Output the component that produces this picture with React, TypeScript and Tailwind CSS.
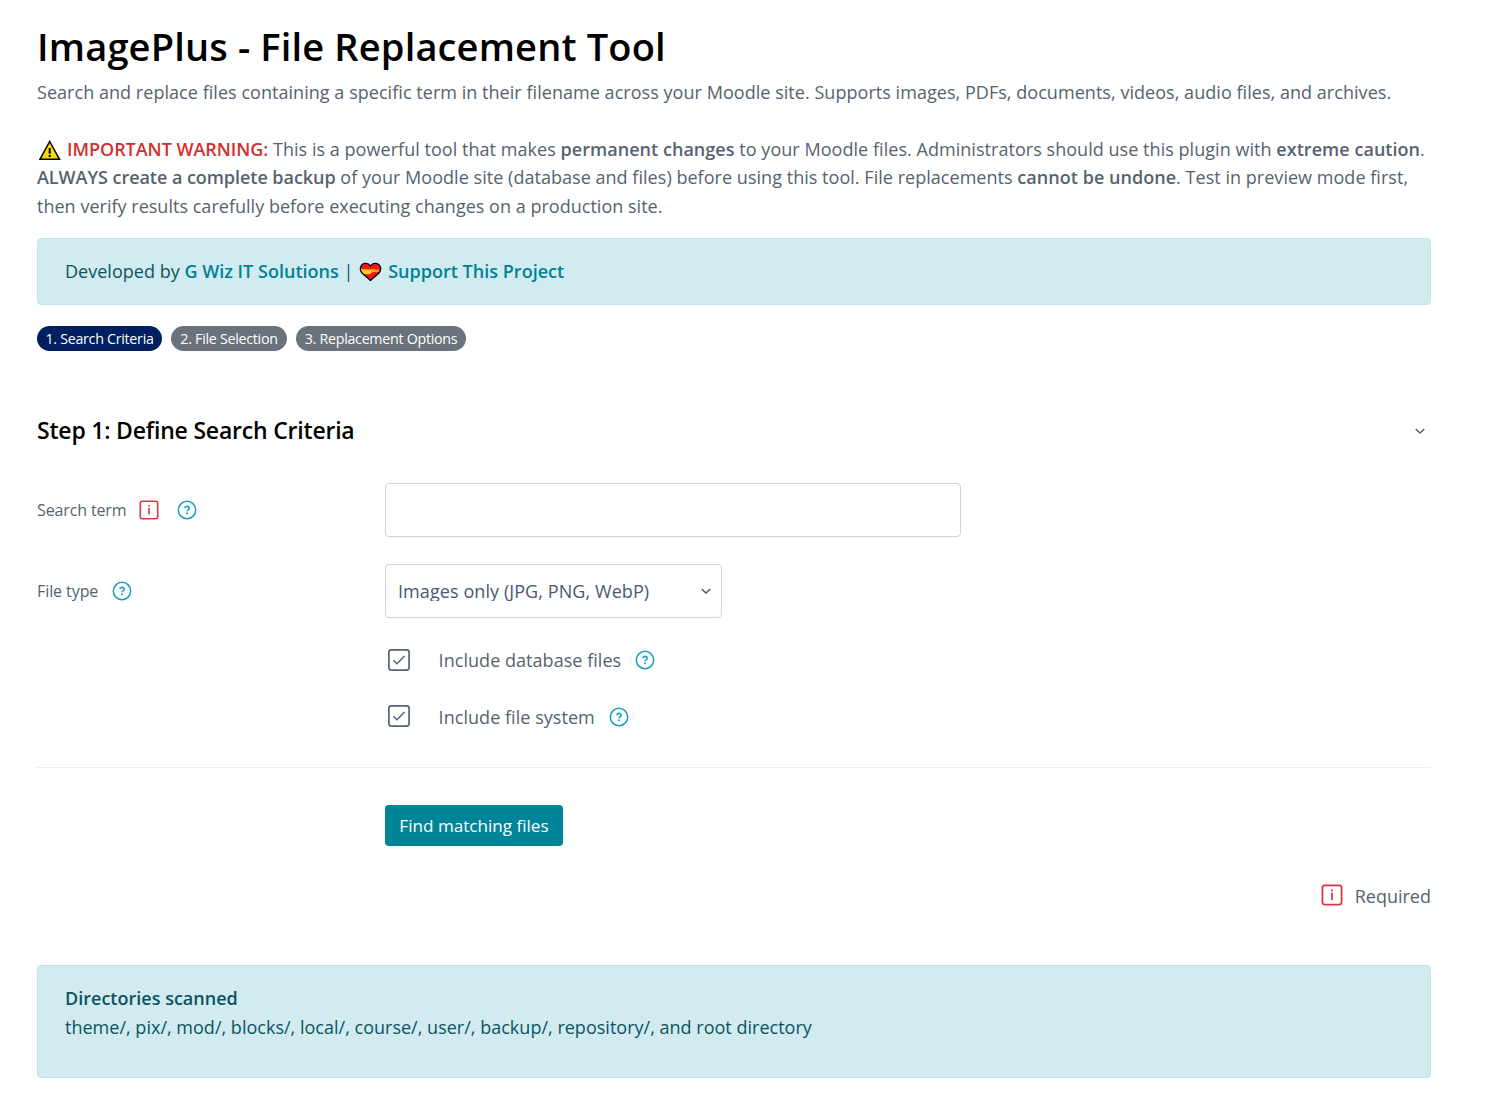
import React from "react";

function Help() {
  return (
    <svg className="block size-5 shrink-0" viewBox="0 0 20 20" fill="none" stroke="#1a9fb9">
      <circle cx="10" cy="10" r="8.7" strokeWidth="1.5" />
      <path d="M7.9 8.3a2.15 1.9 0 1 1 3.2 1.6c-.8.4-1.1.7-1.1 1.4" strokeWidth="1.6" />
      <path d="M9.1 13.4h1.8" strokeWidth="1.8" />
    </svg>
  );
}

function RequiredIcon({ className }: { className: string }) {
  return (
    <svg className={className} viewBox="0 0 20 20" fill="none" stroke="#dc3545">
      <rect x="1.3" y="1.3" width="17.4" height="17.4" rx="2" strokeWidth="1.6" />
      <path d="M10 8v6.5M10 5v1.6" strokeWidth="1.6" />
    </svg>
  );
}

function Chevron() {
  return (
    <svg className="block h-2 w-3 shrink-0" viewBox="0 0 12 8" fill="none" stroke="currentColor" strokeWidth="1.5">
      <path d="M1.7 2 6 6l4.3-4" />
    </svg>
  );
}

function Warning() {
  return (
    <svg className="mr-[5px] ml-[2px] inline-block h-[21px] w-[23px] align-[-5px]" viewBox="0 0 23 21">
      <path d="M10.7 1.5 20.5 19.3H1Z" fill="#f9dc00" stroke="#000" strokeWidth="1.5" />
      <path d="M10.7 8v5.8M10.7 15v2" stroke="#000" strokeWidth="2" />
    </svg>
  );
}

function Heart() {
  return (
    <svg className="mr-1.5 ml-px inline-block h-5 w-[23px] align-[-4px]" viewBox="0 0 23 20">
      <path d="M11.5 18.5 3 11C.3 8 1 3 4.7 1.7 7.5.8 10 1.7 11.5 4 13 1.7 15.5.8 18.3 1.7 22 3 22.7 8 20 11Z" fill="#ee1722" />
      <path d="M1.5 7 10 7.6l3-.3 8.3.7v1.6L13 10.2l-2.5 2-7.2-.2-1.8-2.5Z" fill="#fccf12" />
      <path d="M12 8.5 21 8v1.5l-9 .2Z" fill="#f08a12" />
      <path d="M11.5 18.5 3 11C.3 8 1 3 4.7 1.7 7.5.8 10 1.7 11.5 4 13 1.7 15.5.8 18.3 1.7 22 3 22.7 8 20 11Z" fill="none" stroke="#000" strokeWidth="1.3" />
    </svg>
  );
}

function Check({ label, className }: { label: string; className: string }) {
  return (
    <label className="flex h-[30px] items-center">
      <svg className="ml-[3px] block size-[22px]" viewBox="0 0 22 22" fill="none" stroke="#56617a">
        <rect x=".9" y=".9" width="20.2" height="20.2" rx="2.5" strokeWidth="1.7" />
        <path d="m5.5 11.2 3.5 3.5 7.5-7.7" strokeWidth="1.5" />
      </svg>
      <span className={className}>
        <span className="mr-[14px] ml-[28.6px] pt-[2px]">{label}</span>
        <Help />
      </span>
    </label>
  );
}

export default function App() {
  return (
    <main className="h-[1104px] w-[1486px] overflow-hidden bg-white pt-[19px] pr-[55px] pl-[37px] font-['Open_Sans',sans-serif] text-[18px] leading-[28.5px] tracking-[0.042px] whitespace-nowrap text-[#56636f]">
      <h1 className="text-[38px] leading-[54px] font-semibold tracking-[0.16px] text-black">ImagePlus - File Replacement Tool</h1>
      <p className="mt-[5px]">Search and replace files containing a specific term in their filename across your Moodle site. Supports images, PDFs, documents, videos, audio files, and archives.</p>
      <div className="mt-[28.5px]">
        <p className="h-[28px]"><Warning /><b className="font-semibold tracking-[-0.04px] text-[#d32f2f]">IMPORTANT WARNING:</b> This is a powerful tool that makes <b className="font-semibold">permanent changes</b> to your Moodle files. Administrators should use this plugin with <b className="font-semibold">extreme caution</b>.</p>
        <p className="h-[29px] tracking-[0.035px]"><b className="font-semibold tracking-[-0.045px]">ALWAYS create a complete backup</b> of your Moodle site (database and files) before using this tool. File replacements <b className="font-semibold">cannot be undone</b>. Test in preview mode first,</p>
        <p className="tracking-[0.02px]">then verify results carefully before executing changes on a production site.</p>
      </div>

      <section className="mt-[17px] flex h-[67px] items-center rounded border border-[#bee5eb] bg-[#d1ebf0] px-[27px] tracking-[0.02px] text-[#0c5460]">
        <p>Developed by <b className="font-semibold text-[#008196]">G Wiz IT Solutions</b> | <Heart /><b className="font-semibold text-[#008196]">Support This Project</b></p>
      </section>

      <nav className="mt-[21px] flex gap-[9px] text-[14.25px] leading-[25px] tracking-[-0.28px] text-white">
        <span className="h-[25px] w-[125px] rounded-full bg-[#001f60] text-center">1. Search Criteria</span>
        <span className="h-[25px] w-[116px] rounded-full bg-[#6a737b] text-center">2. File Selection</span>
        <span className="h-[25px] w-[170px] rounded-full bg-[#6a737b] text-center">3. Replacement Options</span>
      </nav>

      <div className="mt-[64px] flex h-8 items-center justify-between pr-[5.5px]">
        <h2 className="text-[23px] font-semibold tracking-[-0.2px] text-black">Step 1: Define Search Criteria</h2>
        <Chevron />
      </div>

      <div className="mt-[36px] flex h-[54px] items-center">
        <div className="flex w-[348px] items-center text-[16px] tracking-[-0.13px]">
          <span className="pt-px">Search term</span><RequiredIcon className="mr-[17.5px] ml-[13px] block size-5" /><Help />
        </div>
        <input aria-label="Search term" className="h-[54px] w-[576px] rounded border border-[#ced4da] px-3 outline-none" />
      </div>
      <div className="mt-[27px] flex h-[54px] items-center">
        <div className="flex w-[348px] items-center text-[16px] tracking-[-0.08px]">
          <span className="mr-[14px] pt-px">File type</span><Help />
        </div>
        <div className="flex h-[54px] w-[337px] items-center justify-between rounded border border-[#ced4da] pr-[9.5px] pl-3 text-[#495872]">
          <span className="h-[20px] overflow-hidden leading-[21px] tracking-[0.08px]">Images only (JPG, PNG, WebP)</span><Chevron />
        </div>
      </div>
      <div className="mt-[27px] flex flex-col gap-[26px] pl-[348px]">
        <Check label="Include database files" className="flex items-center" />
        <Check label="Include file system" className="flex items-center pt-[2px]" />
      </div>

      <hr className="mt-[36px] border-[#eeeeee]" />
      <button className="mt-[37px] ml-[348px] block h-[41px] w-[178px] rounded bg-[#008598] pt-[2px] text-[17.1px] tracking-[0px] text-white">Find matching files</button>
      <div className="mt-[34px] flex h-[30px] items-center justify-end">
        <RequiredIcon className="mr-[11.5px] block size-[22px]" /><span className="pt-[3px] tracking-[0px]">Required</span>
      </div>
      <section className="mt-[55px] h-[113px] rounded border border-[#bee5eb] bg-[#d1ebf0] px-[27px] pt-[18px] tracking-[0.012px] text-[#0c5460]">
        <h3 className="h-[29px] font-semibold">Directories scanned</h3>
        <p>theme/, pix/, mod/, blocks/, local/, course/, user/, backup/, repository/, and root directory</p>
      </section>
    </main>
  );
}
